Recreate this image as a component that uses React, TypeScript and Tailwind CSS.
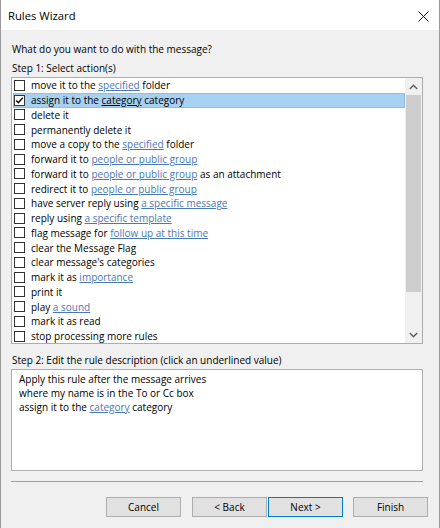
type Action = { pre: string; link?: string; post?: string };

const actions: Action[] = [
    { pre: "move it to the ", link: "specified", post: " folder" },
    { pre: "assign it to the ", link: "category", post: " category" },
    { pre: "delete it" },
    { pre: "permanently delete it" },
    { pre: "move a copy to the ", link: "specified", post: " folder" },
    { pre: "forward it to ", link: "people or public group" },
    { pre: "forward it to ", link: "people or public group", post: " as an attachment" },
    { pre: "redirect it to ", link: "people or public group" },
    { pre: "have server reply using ", link: "a specific message" },
    { pre: "reply using ", link: "a specific template" },
    { pre: "flag message for ", link: "follow up at this time" },
    { pre: "clear the Message Flag" },
    { pre: "clear message's categories" },
    { pre: "mark it as ", link: "importance" },
    { pre: "print it" },
    { pre: "play ", link: "a sound" },
    { pre: "mark it as read" },
    { pre: "stop processing more rules" },
];

const Checkbox = ({ checked }: { checked: boolean }) => (
    <span className="ml-px flex h-[11px] w-[11px] shrink-0 items-center justify-center border border-[#333333] bg-white">
        {checked && (
            <svg width="9" height="9" viewBox="0 0 9 9">
                <path d="M1.2 4.6 L3.4 6.8 L7.8 1.6" fill="none" stroke="#000" strokeWidth="1.4" />
            </svg>
        )}
    </span>
);

const Chevron = ({ up }: { up: boolean }) => (
    <svg width="9" height="6" viewBox="0 0 9 6">
        <path
            d={up ? "M0.8 5 L4.5 1.3 L8.2 5" : "M0.8 1 L4.5 4.7 L8.2 1"}
            fill="none"
            stroke="#606060"
            strokeWidth="1.5"
        />
    </svg>
);

const Button = ({ label, primary }: { label: string; primary?: boolean }) => (
    <button
        type="button"
        className={
            primary
                ? "h-[20px] w-[75px] border border-[#0078d7] bg-[#e1e1e1] text-[10px] text-black"
                : "h-[20px] w-[75px] border border-[#adadad] bg-[#e1e1e1] text-[10px] text-black"
        }
    >
        {label}
    </button>
);

const App = () => {
    return (
        <div className="flex h-[528px] w-[440px] flex-col overflow-hidden border-x border-[#9a9a9a] bg-[#f0f0f0] font-['Open_Sans',sans-serif] text-[10px] text-black">
            {/* title bar */}
            <div className="flex h-[30px] shrink-0 items-center justify-between bg-white pl-[7px] pr-[10px] pt-[2px]">
                <span className="text-[11.25px]">Rules Wizard</span>
                <svg width="11" height="11" viewBox="0 0 11 11">
                    <path d="M0.5 0.5 L10.5 10.5 M10.5 0.5 L0.5 10.5" stroke="#111" strokeWidth="1" />
                </svg>
            </div>

            <div className="flex flex-col pl-[10px] pr-[16px] pt-[11px]">
                <span className="h-[16px] pl-px leading-[16px]">What do you want to do with the message?</span>
                <span className="mt-[3px] h-[16px] pl-px leading-[16px]">Step 1: Select action(s)</span>

                {/* actions list */}
                <div className="mt-px flex h-[267px] border border-[#adadad] bg-white">
                    <div className="flex flex-1 flex-col overflow-hidden">
                        {actions.map((a, i) => {
                            const selected = i === 1;
                            return (
                                <div
                                    key={i}
                                    className={
                                        selected
                                            ? "ml-px flex h-[14.75px] shrink-0 items-center gap-[6px] border border-[#8fbde6] bg-[#a8d0f0] leading-none"
                                            : "ml-px flex h-[14.75px] shrink-0 items-center gap-[6px] border border-transparent leading-none"
                                    }
                                >
                                    <span className="-ml-px">
                                        <Checkbox checked={selected} />
                                    </span>
                                    <span className="whitespace-nowrap">
                                        {a.pre.replace(/ $/, "\u00a0")}
                                        {a.link && (
                                            <span className={selected ? "underline" : "text-[#4a78b5] underline"}>
                                                {a.link}
                                            </span>
                                        )}
                                        {a.post && a.post.replace(/^ /, "\u00a0")}
                                    </span>
                                </div>
                            );
                        })}
                    </div>
                    {/* scrollbar */}
                    <div className="flex w-[17px] shrink-0 flex-col bg-[#f0f0f0]">
                        <div className="flex h-[17px] items-center justify-center">
                            <Chevron up />
                        </div>
                        <div className="mx-px h-[197px] bg-[#cdcdcd]" />
                        <div className="flex-1" />
                        <div className="flex h-[17px] items-center justify-center">
                            <Chevron up={false} />
                        </div>
                    </div>
                </div>

                <span className="mt-[8px] h-[16px] pl-px leading-[16px]">
                    Step 2: Edit the rule description (click an underlined value)
                </span>

                {/* description */}
                <div className="mt-px flex h-[102px] flex-col border border-[#adadad] bg-white pl-[7px] pt-[2px] leading-[14px]">
                    <span>Apply this rule after the message arrives</span>
                    <span>where my name is in the To or Cc box</span>
                    <span>
                        assign it to the <span className="text-[#4a78b5] underline">category</span> category
                    </span>
                </div>

                <div className="mt-[10px] h-px bg-[#a0a0a0]" />
            </div>

            {/* buttons */}
            <div className="mt-[15px] flex pl-[105px]">
                <Button label="Cancel" />
                <span className="ml-[11px]">
                    <Button label="< Back" />
                </span>
                <span className="ml-px">
                    <Button label="Next >" primary />
                </span>
                <span className="ml-[10px]">
                    <Button label="Finish" />
                </span>
            </div>
        </div>
    );
};

export default App;
